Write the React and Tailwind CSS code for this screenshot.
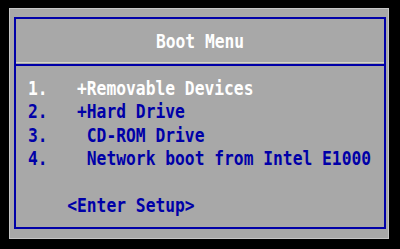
export default function App() {
  const font = { fontFamily: '"DejaVu Sans Mono", "Liberation Mono", monospace' };
  const lines = [
    { t: "1.   +Removable Devices", c: "text-white" },
    { t: "2.   +Hard Drive", c: "text-[#0000a8]" },
    { t: "3.    CD-ROM Drive", c: "text-[#0000a8]" },
    { t: "4.    Network boot from Intel E1000", c: "text-[#0000a8]" },
    { t: " ", c: "text-[#0000a8]" },
    { t: "    <Enter Setup>", c: "text-[#0000a8]" },
  ];
  return (
    <div className="w-[400px] h-[249px] bg-black pt-[8px] pl-[9px]" style={font}>
      <div className="w-[380px] h-[231px] bg-[#a8a8a8] border border-[#c6c6c6] pt-[8px] pl-[4px]">
        <div className="w-[372px] h-[212px] border-2 border-[#0000a8] flex flex-col">
          <div className="h-[43px] pt-[2px] flex items-center justify-center">
            <span className="text-white font-bold text-[16.3px] leading-[23.4px] scale-y-[1.22] whitespace-pre">
              Boot Menu
            </span>
          </div>
          <div className="h-[1px] bg-[#d4d4cc]" />
          <div className="h-[1px]" />
          <div className="h-[2px] bg-[#0000a8]" />
          <div className="pt-[11px] pl-[12px] flex flex-col">
            {lines.map((l, i) => (
              <div
                key={i}
                className={`h-[23.4px] text-[16.3px] leading-[23.4px] font-bold whitespace-pre scale-y-[1.22] ${l.c}`}
              >
                {l.t}
              </div>
            ))}
          </div>
        </div>
      </div>
    </div>
  );
}
